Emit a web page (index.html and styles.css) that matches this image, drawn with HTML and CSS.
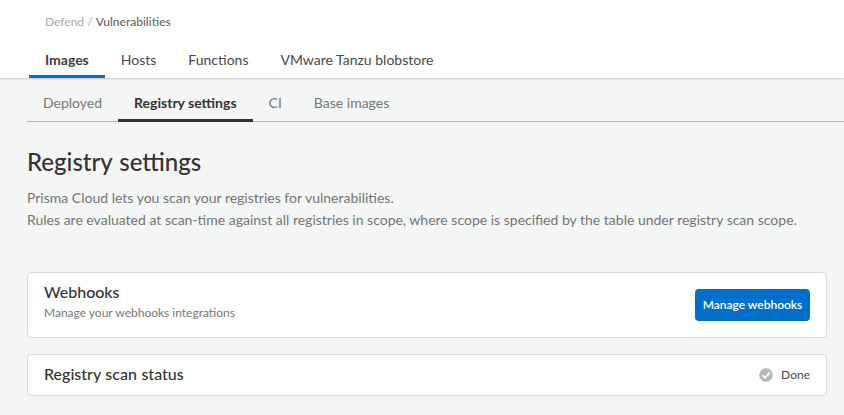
FILE: index.html
```html
<!DOCTYPE html>
<html lang="en">
<head>
<meta charset="utf-8">
<title>Registry settings</title>
<link rel="stylesheet" href="styles.css">
</head>
<body>
<header class="header">
  <div class="breadcrumb"><span>Defend</span> <span>/</span> <span class="current">Vulnerabilities</span></div>
  <nav class="tabs">
    <a class="tab active">Images</a><a class="tab">Hosts</a><a class="tab">Functions</a><a class="tab">VMware Tanzu blobstore</a>
  </nav>
</header>
<main class="content">
  <nav class="subtabs">
    <a class="subtab">Deployed</a><a class="subtab active">Registry settings</a><a class="subtab">CI</a><a class="subtab">Base images</a>
  </nav>
  <h1>Registry settings</h1>
  <p class="intro">Prisma Cloud lets you scan your registries for vulnerabilities.<br>Rules are evaluated at scan-time against all registries in scope, where scope is specified by the table under registry scan scope.</p>
  <section class="card webhooks">
    <div class="card-text">
      <h2>Webhooks</h2>
      <p class="hint">Manage your webhooks integrations</p>
    </div>
    <button class="button">Manage webhooks</button>
  </section>
  <section class="card scan">
    <h2>Registry scan status</h2>
    <div class="status">
      <svg width="14" height="14" viewBox="0 0 14 14"><circle cx="7" cy="7" r="6.8" fill="#b7b7b7"/><path d="M3.3 7.1 6 9.6 10.7 4.7" fill="none" stroke="#fff" stroke-width="1.9"/></svg>
      <span>Done</span>
    </div>
  </section>
</main>
</body>
</html>
```
FILE: styles.css
```css
* { box-sizing: border-box; }
body { margin: 0; height: 415px; overflow: hidden; background: #f4f6f5; color: #333; font-family: Lato, "Liberation Sans", sans-serif; font-size: 14px; }
.header { position: relative; height: 78px; background: #fff; box-shadow: 0 1px 2px rgba(0,0,0,.2); padding: 14px 0 0 29px; }
.breadcrumb { padding-left: 16px; font-size: 12px; line-height: 16px; color: #aaa; }
.breadcrumb .current { color: #666; font-weight: 500; }
.tabs { display: flex; margin-top: 12px; height: 36px; }
.tab { padding: 8px 16px 0; line-height: 20px; color: #484848; }
.tab.active { color: #404040; font-weight: 700; border-bottom: 3px solid #006fcc; }
.content { padding: 0 17px 0 27px; }
.subtabs { display: flex; height: 44px; margin-right: -17px; border-bottom: 1px solid #bbb; }
.subtab { padding: 15px 16px 0; height: 44px; line-height: 20px; color: #777; }
.subtab.active { color: #333; font-weight: 700; border-bottom: 3px solid #333; }
h1 { margin: 25px 0 0; font-size: 24px; line-height: 30px; font-weight: 500; word-spacing: 1px; }
.intro { margin: 10px 0 0; line-height: 22px; color: #757575; white-space: nowrap; }
.card { display: flex; justify-content: space-between; align-items: center; padding: 0 16px; background: #fff; border: 1px solid #dadada; border-radius: 4px; }
.webhooks { height: 66px; margin-top: 41px; }
.card-text { padding-bottom: 6px; }
.scan { height: 42px; margin-top: 16px; }
h2 { margin: 0; font-size: 16px; line-height: 20px; font-weight: 500; word-spacing: 0.5px; }
.scan h2 { padding-bottom: 2px; }
.hint { margin: 2px 0 0; font-size: 12px; line-height: 18px; color: #777; }
.button { width: 115px; height: 32px; padding: 0 0 2px; border: 0; border-radius: 4px; background: #006fcc; color: #fff; font: 600 12px Lato, sans-serif; }
.status { display: flex; align-items: center; gap: 8px; font-size: 12px; }
.status span { padding-bottom: 1px; color: #484848; }
```
